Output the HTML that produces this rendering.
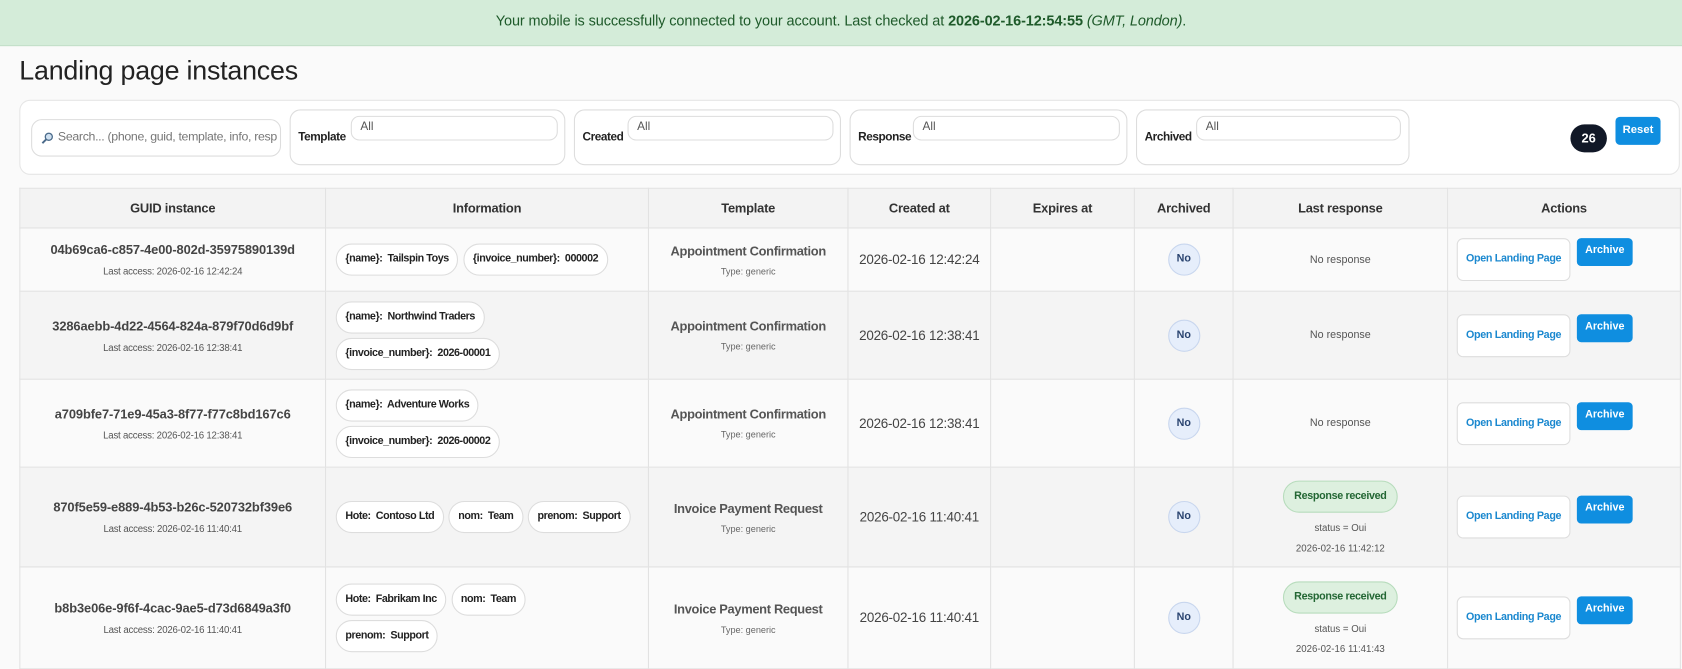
<!DOCTYPE html>
<html><head><meta charset="utf-8"><style>
*{box-sizing:border-box;margin:0;padding:0}
html,body{width:1682px;height:660px;overflow:hidden;background:#fafafa}
#w{position:absolute;left:0;top:0;width:1568px;height:615px;transform:scale(1.07270);transform-origin:0 0;font-family:"Liberation Sans",sans-serif;color:#333}
.banner{position:absolute;left:0;top:0;width:1568px;height:43px;background:#d4ecd9;border-bottom:1px solid #c3e0c9;color:#1e5a2a;font-size:13.5px;text-align:center;line-height:40px;letter-spacing:-0.1px}
h1{position:absolute;left:18px;top:52px;font-size:25px;font-weight:400;color:#222;letter-spacing:-0.2px}
.card{position:absolute;left:18px;top:93px;width:1548px;height:70px;background:#fff;border:1px solid #e6e6e6;border-radius:10px}
.search{position:absolute;left:29px;top:111px;width:233px;height:35px;border:1px solid #ddd;border-radius:10px;background:#fff;font-size:11.5px;color:#777;line-height:33px;padding-left:24px;white-space:nowrap;overflow:hidden;letter-spacing:-0.3px}
.search svg{position:absolute;left:8px;top:11px}
.fg{position:absolute;top:102px;height:52px;border:1px solid #ddd;border-radius:10px;background:#fff}
.fg b{position:absolute;left:7px;top:19px;font-size:11px;color:#222;letter-spacing:-0.4px}
.fg i{position:absolute;top:5px;height:23px;border:1px solid #ddd;border-radius:8px;font-style:normal;font-size:11px;color:#555;padding:3px 8px}
.count{position:absolute;left:1464px;top:116px;width:34px;height:26px;border-radius:13px;background:#111827;color:#fff;font-size:12px;font-weight:bold;text-align:center;line-height:26px}
.reset{position:absolute;left:1506px;top:109px;width:42px;height:26px;border-radius:4px;background:#0f8ee0;color:#fff;font-size:10.5px;font-weight:bold;text-align:center;line-height:24px}
table{position:absolute;left:18px;top:175px;border-collapse:collapse;width:1548px;table-layout:fixed}
td,th{border:1px solid #e2e2e2;text-align:center;vertical-align:middle}
th{height:37px;background:#f3f3f3;font-size:12px;color:#333;font-weight:bold;letter-spacing:-0.2px}
tr.a td{background:#fafafa}tr.b td{background:#f4f4f4}
.guid{font-size:12px;font-weight:bold;color:#444;letter-spacing:-0.1px}
.sm{font-size:9px;color:#555;margin-top:8px;letter-spacing:-0.2px}
td.info{text-align:left;padding:0 0 0 9px}
.chip{display:inline-block;height:30px;line-height:28px;border:1px solid #ddd;border-radius:15px;background:#fff;padding:0 8px;font-size:10px;font-weight:bold;color:#222;margin:2px 0;letter-spacing:-0.4px;white-space:nowrap}
.tpl{font-size:12px;font-weight:bold;color:#555;letter-spacing:-0.3px}
.type{font-size:8.5px;color:#666;margin-top:7px}
.date{font-size:12.5px;color:#444;letter-spacing:-0.2px}
.no{display:inline-block;width:30px;height:30px;border-radius:50%;background:#e6eefb;border:1px solid #c8d6ee;font-size:10px;font-weight:bold;color:#2a4470;line-height:28px}
.nr{font-size:10px;color:#555}
.rr{display:inline-block;height:30px;line-height:28px;padding:0 9px;border-radius:15px;background:#ddf0df;border:1px solid #b7dcbc;color:#226633;font-size:10px;font-weight:bold;letter-spacing:-0.3px}
.st{font-size:9px;color:#555;margin-top:9px}
td.act{text-align:left;padding-left:8px;white-space:nowrap}
.olp{display:inline-block;vertical-align:top;width:106px;height:40px;line-height:38px;border:1px solid #ddd;border-radius:6px;background:#fff;color:#1b88cf;font-size:10px;font-weight:bold;text-align:center;letter-spacing:-0.3px}
.arc{display:inline-block;vertical-align:top;margin-left:6px;width:52px;height:26px;line-height:24px;border-radius:4px;background:#0f8ee0;color:#fff;font-size:10px;font-weight:bold;text-align:center}
</style></head><body><div id="w">
<div class="banner">Your mobile is successfully connected to your account. Last checked at <b>2026-02-16-12:54:55</b> <i>(GMT, London)</i>.</div>
<h1>Landing page instances</h1>
<div class="card"></div>
<div class="search"><svg width="12" height="12" viewBox="0 0 12 12"><circle cx="7.5" cy="4.5" r="3.3" fill="#cfe0f0" stroke="#4a6a8a" stroke-width="1.2"/><path d="M5 7L1.5 10.5" stroke="#4a6a8a" stroke-width="1.8"/></svg>Search... (phone, guid, template, info, resp</div>
<div class="fg" style="left:270px;width:257px"><b>Template</b><i style="left:56px;width:193px">All</i></div>
<div class="fg" style="left:535px;width:249px"><b>Created</b><i style="left:49px;width:192px">All</i></div>
<div class="fg" style="left:792px;width:259px"><b>Response</b><i style="left:58px;width:193px">All</i></div>
<div class="fg" style="left:1059px;width:255px"><b>Archived</b><i style="left:55px;width:191px">All</i></div>
<div class="count">26</div><div class="reset">Reset</div>
<table>
<colgroup><col style="width:285px"><col style="width:301px"><col style="width:186px"><col style="width:133px"><col style="width:134px"><col style="width:92px"><col style="width:200px"><col style="width:217px"></colgroup>
<tr><th>GUID instance</th><th>Information</th><th>Template</th><th>Created at</th><th>Expires at</th><th>Archived</th><th>Last response</th><th>Actions</th></tr>
<tr class="a" style="height:59px"><td><div class="guid">04b69ca6-c857-4e00-802d-35975890139d</div><div class="sm">Last access: 2026-02-16 12:42:24</div></td><td class="info"><span class="chip">{name}:&nbsp; Tailspin Toys</span> <span class="chip">{invoice_number}:&nbsp; 000002</span></td><td><div class="tpl">Appointment Confirmation</div><div class="type">Type: generic</div></td><td class="date">2026-02-16 12:42:24</td><td></td><td><span class="no">No</span></td><td class="nr">No response</td><td class="act"><span class="olp">Open Landing Page</span><span class="arc">Archive</span></td></tr>
<tr class="b" style="height:82px"><td><div class="guid">3286aebb-4d22-4564-824a-879f70d6d9bf</div><div class="sm">Last access: 2026-02-16 12:38:41</div></td><td class="info"><span class="chip">{name}:&nbsp; Northwind Traders</span><br><span class="chip">{invoice_number}:&nbsp; 2026-00001</span></td><td><div class="tpl">Appointment Confirmation</div><div class="type">Type: generic</div></td><td class="date">2026-02-16 12:38:41</td><td></td><td><span class="no">No</span></td><td class="nr">No response</td><td class="act"><span class="olp">Open Landing Page</span><span class="arc">Archive</span></td></tr>
<tr class="a" style="height:82px"><td><div class="guid">a709bfe7-71e9-45a3-8f77-f77c8bd167c6</div><div class="sm">Last access: 2026-02-16 12:38:41</div></td><td class="info"><span class="chip">{name}:&nbsp; Adventure Works</span><br><span class="chip">{invoice_number}:&nbsp; 2026-00002</span></td><td><div class="tpl">Appointment Confirmation</div><div class="type">Type: generic</div></td><td class="date">2026-02-16 12:38:41</td><td></td><td><span class="no">No</span></td><td class="nr">No response</td><td class="act"><span class="olp">Open Landing Page</span><span class="arc">Archive</span></td></tr>
<tr class="b" style="height:93px"><td><div class="guid">870f5e59-e889-4b53-b26c-520732bf39e6</div><div class="sm">Last access: 2026-02-16 11:40:41</div></td><td class="info" style="white-space:nowrap"><span class="chip">Hote:&nbsp; Contoso Ltd</span> <span class="chip">nom:&nbsp; Team</span> <span class="chip">prenom:&nbsp; Support</span></td><td><div class="tpl">Invoice Payment Request</div><div class="type">Type: generic</div></td><td class="date">2026-02-16 11:40:41</td><td></td><td><span class="no">No</span></td><td><span class="rr">Response received</span><div class="st">status = Oui</div><div class="st">2026-02-16 11:42:12</div></td><td class="act"><span class="olp">Open Landing Page</span><span class="arc">Archive</span></td></tr>
<tr class="a" style="height:95px"><td><div class="guid">b8b3e06e-9f6f-4cac-9ae5-d73d6849a3f0</div><div class="sm">Last access: 2026-02-16 11:40:41</div></td><td class="info"><span class="chip">Hote:&nbsp; Fabrikam Inc</span> <span class="chip">nom:&nbsp; Team</span><br><span class="chip">prenom:&nbsp; Support</span></td><td><div class="tpl">Invoice Payment Request</div><div class="type">Type: generic</div></td><td class="date">2026-02-16 11:40:41</td><td></td><td><span class="no">No</span></td><td><span class="rr">Response received</span><div class="st">status = Oui</div><div class="st">2026-02-16 11:41:43</div></td><td class="act"><span class="olp">Open Landing Page</span><span class="arc">Archive</span></td></tr>
</table>
</div></body></html>
